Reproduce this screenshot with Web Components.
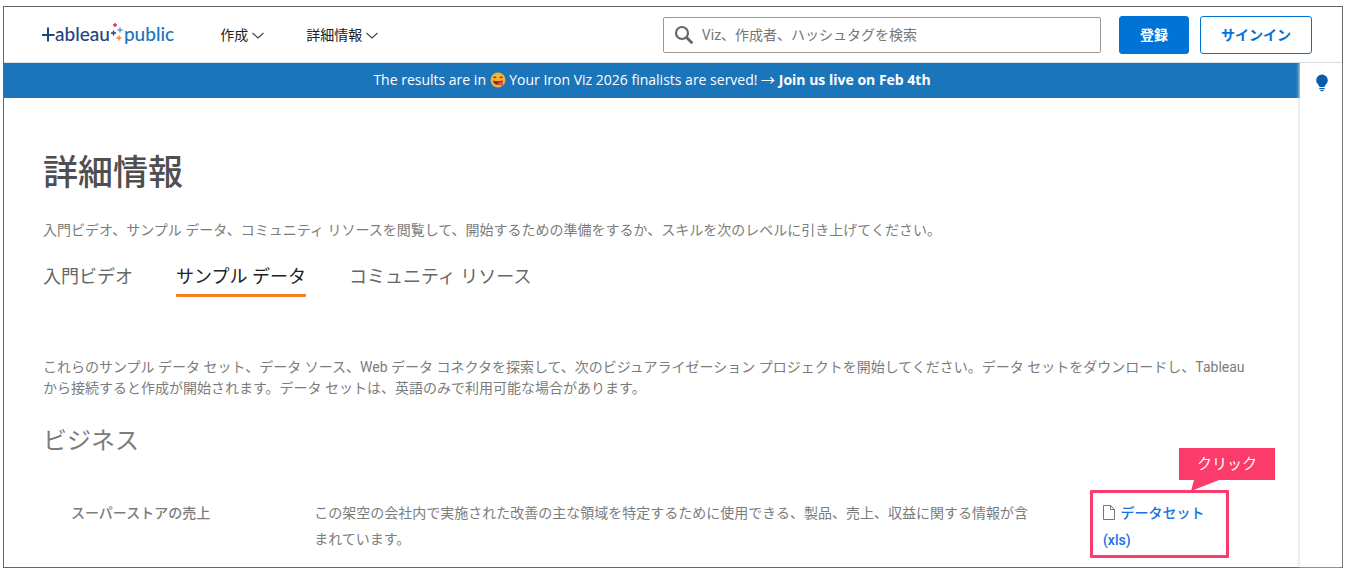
<!DOCTYPE html>
<html lang="ja">
<head>
<meta charset="utf-8">
<title>詳細情報 | Tableau Public</title>
<style>
    body {
        margin: 0;
        background: #fff;
        font-family: Roboto, "Noto Sans CJK JP", sans-serif;
        font-size: 14px;
        color: #7c7c7c;
    }
</style>
</head>
<body>
<public-app></public-app>

<script>
class PublicLogo extends HTMLElement {
    constructor() {
        super();
        this.attachShadow({ mode: 'open' });
    }

    connectedCallback() {
        this.shadowRoot.innerHTML = `
            <style>
                :host { display: block; }
                a {
                    display: flex;
                    align-items: flex-start;
                    font-family: Lato, sans-serif;
                    font-size: 19px;
                    font-weight: 500;
                    line-height: 26px;
                    color: #1f457e;
                    text-decoration: none;
                }
                svg { display: block; }
                .public { color: #1c74bb; }
            </style>
            <a href="#" aria-label="Tableau Public">
                <svg width="13" height="28" viewBox="0 0 13 28" fill="none" stroke="#1f457e" stroke-width="2">
                    <path d="M0 14h12.500M6 6.500v14"/>
                </svg>
                <span>ableau</span>
                <svg width="14" height="28" viewBox="0 0 14 28" fill="none" stroke-width="1.400">
                    <path stroke="#e8274b" d="M3 4h4M5 2v4"/>
                    <path stroke="#5b9bd0" d="M7.500 9h5M10 6.500v5"/>
                    <path stroke="#1f457e" d="M1 12h5M3.500 9.500v5"/>
                    <path stroke="#eb8a3c" d="M6.500 17h5M9 14.500v5"/>
                </svg>
                <span class="public">public</span>
            </a>
        `;
    }
}

class NavMenu extends HTMLElement {
    constructor() {
        super();
        this.attachShadow({ mode: 'open' });
    }

    connectedCallback() {
        this.shadowRoot.innerHTML = `
            <style>
                :host { display: block; }
                button {
                    display: flex;
                    align-items: center;
                    gap: 4px;
                    padding: 0;
                    border: 0;
                    background: none;
                    font: inherit;
                    line-height: 24px;
                    color: #222;
                }
            </style>
            <button type="button" aria-haspopup="true">
                <slot></slot>
                <svg width="12" height="8" viewBox="0 0 12 8" fill="none" stroke="#444" stroke-width="1.100" aria-hidden="true">
                    <path d="M.5 2l5.500 5L11.500 2"/>
                </svg>
            </button>
        `;
    }
}

class SearchBox extends HTMLElement {
    constructor() {
        super();
        this.attachShadow({ mode: 'open' });
    }

    connectedCallback() {
        this.shadowRoot.innerHTML = `
            <style>
                :host { display: block; }
                label {
                    display: flex;
                    align-items: center;
                    gap: 8px;
                    height: 34px;
                    padding: 0 10px;
                    border: 1px solid #999;
                    border-radius: 2px;
                }
                input {
                    flex: 1;
                    min-width: 0;
                    padding: 0;
                    border: 0;
                    outline: 0;
                    background: none;
                    font: inherit;
                    color: #333;
                }
                input::placeholder { color: #757575; opacity: 1; }
            </style>
            <label>
                <svg width="20" height="20" viewBox="0 0 20 20" fill="none" stroke="#666" aria-hidden="true">
                    <circle cx="8" cy="8" r="6" stroke-width="2.200"/>
                    <path d="M12.300 12.300l6 6" stroke-width="2.800"/>
                </svg>
                <input type="search" placeholder="Viz、作成者、ハッシュタグを検索" aria-label="検索">
            </label>
        `;
    }
}

class ActionButton extends HTMLElement {
    constructor() {
        super();
        this.attachShadow({ mode: 'open' });
    }

    connectedCallback() {
        this.shadowRoot.innerHTML = `
            <style>
                :host { display: block; }
                button {
                    height: 38px;
                    padding: 0 20px 2px;
                    border: 1px solid #0073d6;
                    border-radius: 3px;
                    background: #fff;
                    font: inherit;
                    font-weight: 700;
                    color: #0073d6;
                }
                :host([primary]) button { background: #0073d6; color: #fff; }
            </style>
            <button type="button"><slot></slot></button>
        `;
    }
}

class SiteHeader extends HTMLElement {
    constructor() {
        super();
        this.attachShadow({ mode: 'open' });
    }

    connectedCallback() {
        this.shadowRoot.innerHTML = `
            <style>
                :host {
                    display: flex;
                    align-items: center;
                    height: 55px;
                    padding: 0 30px 0 38px;
                    border-bottom: 1px solid #d8e2ec;
                }
                nav { display: flex; gap: 42px; margin-left: 46px; }
                search-box { width: 34.5%; min-width: 200px; margin-left: auto; }
                .actions { display: flex; gap: 11px; margin-left: 18px; }
            </style>
            <public-logo></public-logo>
            <nav>
                <nav-menu>作成</nav-menu>
                <nav-menu>詳細情報</nav-menu>
            </nav>
            <search-box></search-box>
            <div class="actions">
                <action-button primary>登録</action-button>
                <action-button>サインイン</action-button>
            </div>
        `;
    }
}

class PromoBanner extends HTMLElement {
    constructor() {
        super();
        this.attachShadow({ mode: 'open' });
    }

    connectedCallback() {
        this.shadowRoot.innerHTML = `
            <style>
                :host {
                    display: block;
                    padding: 5px 0 6px;
                    background: #1b75bb;
                    font-family: "Open Sans", "Noto Sans CJK JP", sans-serif;
                    line-height: 24px;
                    text-align: center;
                    color: #fff;
                }
                svg { width: 16px; height: 16px; vertical-align: -3px; }
                a { color: #fff; font-weight: 700; text-decoration: none; }
            </style>
            The results are in
            <svg viewBox="0 0 16 16" role="img" aria-label="😋">
                <circle cx="8" cy="8" r="7.500" fill="#fbb034"/>
                <path d="M3.500 6q1.300-2 2.700 0M9.800 6q1.300-2 2.700 0" fill="none" stroke="#5b3716" stroke-width="1.200"/>
                <path d="M3 8.500q5 1.600 10 0-.5 4.200-5 4.200T3 8.500z" fill="#7a2f1c"/>
                <path d="M8 11q2.500-2 4.500-.5 1.500 2.500 0 3.500t-4.500-3z" fill="#ee4470"/>
            </svg>
            Your Iron Viz 2026 finalists are served! → <a href="#">Join us live on Feb 4th</a>
        `;
    }
}

class HintRail extends HTMLElement {
    constructor() {
        super();
        this.attachShadow({ mode: 'open' });
    }

    connectedCallback() {
        this.shadowRoot.innerHTML = `
            <style>
                :host {
                    display: block;
                    flex: none;
                    width: 42px;
                    box-shadow: -1px 0 3px #ddd;
                    background: #fff;
                }
                button {
                    display: block;
                    width: 100%;
                    padding: 11px 0 0 1px;
                    border: 0;
                    background: none;
                }
                svg { display: block; margin: 0 auto; }
            </style>
            <button type="button" aria-label="ヒント">
                <svg width="12" height="18" viewBox="0 0 12 18" fill="#0b5cab">
                    <path d="M6 .5a5.700 5.700 0 0 0-5.800 5.700c0 3.400 3 4.300 3.200 6.800h5.200c.2-2.500 3.200-3.400 3.200-6.800A5.700 5.700 0 0 0 6 .5z"/>
                    <path d="M3.300 14h5.400v1.200H3.300zM4 16h4l-1 1.200H5z"/>
                </svg>
            </button>
        `;
    }
}

class TabBar extends HTMLElement {
    constructor() {
        super();
        this.attachShadow({ mode: 'open' });
    }

    connectedCallback() {
        this.shadowRoot.innerHTML = `
            <style>
                :host { display: block; }
                nav { display: flex; gap: 43px; }
                a {
                    padding-bottom: 3px;
                    border-bottom: 3px solid transparent;
                    border-radius: 1px;
                    font-size: 18px;
                    line-height: 28px;
                    color: #666;
                    text-decoration: none;
                }
                a[aria-current] { border-color: #f58220; color: #222; }
            </style>
            <nav>
                <a href="#">入門ビデオ</a>
                <a href="#" aria-current="page">サンプル データ</a>
                <a href="#">コミュニティ リソース</a>
            </nav>
        `;
    }
}

// Pink callout placed over the element it wraps
class ClickCallout extends HTMLElement {
    constructor() {
        super();
        this.attachShadow({ mode: 'open' });
    }

    connectedCallback() {
        this.shadowRoot.innerHTML = `
            <style>
                :host {
                    display: block;
                    position: relative;
                    padding: 7px 10px 1px;
                    border: 3px solid #fb3b69;
                    border-radius: 1px;
                }
                .label {
                    position: absolute;
                    left: 86px;
                    bottom: calc(100% + 13px);
                    width: 96px;
                    background: #fb3b69;
                    font-size: 15px;
                    line-height: 32px;
                    text-align: center;
                    color: #fff;
                }
                svg { position: absolute; top: 100%; left: 12px; }
            </style>
            <slot></slot>
            <div class="label">クリック
                <svg width="30" height="11" viewBox="0 0 30 11" fill="#fb3b69" aria-hidden="true">
                    <path d="M3 0L0 11 28 0z"/>
                </svg>
            </div>
        `;
    }
}

class DatasetRow extends HTMLElement {
    constructor() {
        super();
        this.attachShadow({ mode: 'open' });
    }

    connectedCallback() {
        this.shadowRoot.innerHTML = `
            <style>
                :host {
                    display: flex;
                    padding: 0 32px 0 28px;
                    line-height: 26px;
                }
                h3 {
                    flex: 0 0 21%;
                    margin: 0;
                    font-size: 14px;
                    font-weight: 500;
                }
                p { flex: 0 0 62%; margin: 0; }
                click-callout { flex: none; width: 113px; margin: -10px 0 0 auto; }
                a {
                    line-height: 27px;
                    font-weight: 500;
                    color: #1a6fe0;
                    text-decoration: none;
                }
                svg { margin-right: 2px; vertical-align: -2px; }
            </style>
            <h3><slot name="title"></slot></h3>
            <p><slot></slot></p>
            <click-callout>
                <a href="#"><svg width="12" height="15" viewBox="0 0 12 15" fill="none" stroke="#777" aria-hidden="true"><path d="M.5.5h7l4 4v10H.5zM7.500.5v4h4"/></svg>
                <slot name="file"></slot></a>
            </click-callout>
        `;
    }
}

class ResourcePage extends HTMLElement {
    constructor() {
        super();
        this.attachShadow({ mode: 'open' });
    }

    connectedCallback() {
        this.shadowRoot.innerHTML = `
            <style>
                :host { display: block; padding: 50px 39px 0; }
                h1 {
                    margin: 0;
                    font-size: 35px;
                    font-weight: 500;
                    line-height: 52px;
                    color: #4f4f4f;
                }
                .lead { margin: 20px 0 0; line-height: 21px; }
                tab-bar { margin-top: 22px; }
                .intro { margin: 60px 0 0; line-height: 21px; }
                h2 {
                    margin: 24px 0 0;
                    font-size: 24px;
                    font-weight: 400;
                    line-height: 36px;
                }
                dataset-row { margin-top: 41px; }
            </style>
            <h1>詳細情報</h1>
            <p class="lead">入門ビデオ、サンプル データ、コミュニティ リソースを閲覧して、開始するための準備をするか、スキルを次のレベルに引き上げてください。</p>
            <tab-bar></tab-bar>
            <p class="intro">これらのサンプル データ セット、データ ソース、Web データ コネクタを探索して、次のビジュアライゼーション プロジェクトを開始してください。データ セットをダウンロードし、Tableau から接続すると作成が開始されます。データ セットは、英語のみで利用可能な場合があります。</p>
            <h2>ビジネス</h2>
            <dataset-row>
                <span slot="title">スーパーストアの売上</span>
                この架空の会社内で実施された改善の主な領域を特定するために使用できる、製品、売上、収益に関する情報が含まれています。
                <span slot="file">データセット (xls)</span>
            </dataset-row>
        `;
    }
}

class PublicApp extends HTMLElement {
    constructor() {
        super();
        this.attachShadow({ mode: 'open' });
    }

    connectedCallback() {
        this.shadowRoot.innerHTML = `
            <style>
                :host {
                    display: flex;
                    flex-direction: column;
                    box-sizing: border-box;
                    min-height: calc(100vh - 6px);
                    margin: 6px 2px 0 3px;
                    border: 1px solid #666;
                }
                .body { display: flex; flex: 1; }
                main { flex: 1; min-width: 0; }
            </style>
            <site-header></site-header>
            <div class="body">
                <main>
                    <promo-banner></promo-banner>
                    <resource-page></resource-page>
                </main>
                <hint-rail></hint-rail>
            </div>
        `;
    }
}

customElements.define('public-logo', PublicLogo);
customElements.define('nav-menu', NavMenu);
customElements.define('search-box', SearchBox);
customElements.define('action-button', ActionButton);
customElements.define('site-header', SiteHeader);
customElements.define('promo-banner', PromoBanner);
customElements.define('hint-rail', HintRail);
customElements.define('tab-bar', TabBar);
customElements.define('click-callout', ClickCallout);
customElements.define('dataset-row', DatasetRow);
customElements.define('resource-page', ResourcePage);
customElements.define('public-app', PublicApp);
</script>
</body>
</html>
